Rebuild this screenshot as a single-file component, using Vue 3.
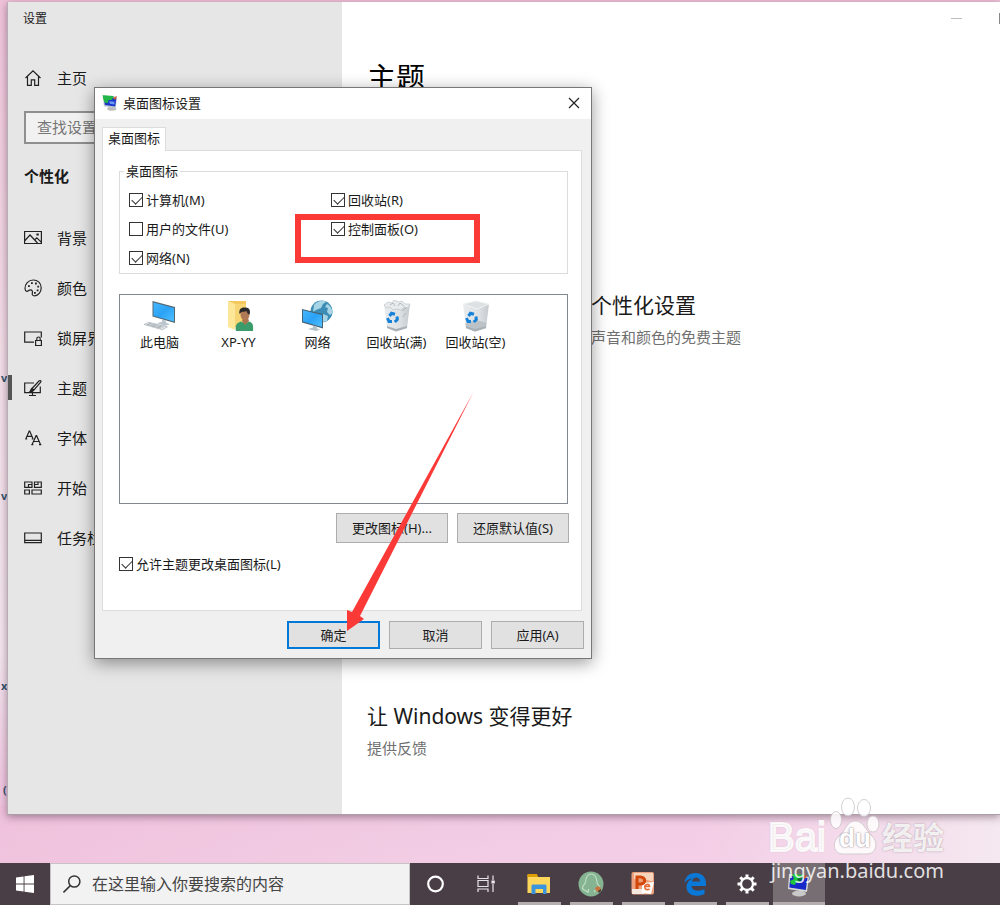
<script setup>
import { ref } from 'vue'

const navItems = [
  { id: 'background', label: '背景' },
  { id: 'colors', label: '颜色' },
  { id: 'lock', label: '锁屏界' },
  { id: 'themes', label: '主题', current: true },
  { id: 'fonts', label: '字体' },
  { id: 'start', label: '开始' },
  { id: 'taskbar', label: '任务栏' },
]

const checks = ref([
  { id: 'computer', label: '计算机(M)', on: true },
  { id: 'recycle', label: '回收站(R)', on: true },
  { id: 'files', label: '用户的文件(U)', on: false },
  { id: 'control', label: '控制面板(O)', on: true },
  { id: 'network', label: '网络(N)', on: true },
])
const allowThemes = ref(true)

const icons = [
  { id: 'pc', label: '此电脑' },
  { id: 'user', label: 'XP-YY' },
  { id: 'net', label: '网络' },
  { id: 'full', label: '回收站(满)' },
  { id: 'empty', label: '回收站(空)' },
]

const apps = [
  { id: 'explorer', name: 'explorer' },
  { id: 'tree', name: 'tree' },
  { id: 'ppt', name: 'ppt' },
  { id: 'edge', name: 'edge' },
  { id: 'gear', name: 'gear' },
  { id: 'display', name: 'display', active: true },
]
</script>

<template>
  <div class="desktop">
    <div class="shortcuts" aria-hidden="true">
      <span class="sc sc-top">v</span>
      <span class="sc sc-a">v</span>
      <span class="sc sc-b">x</span>
      <span class="sc sc-c">(</span>
    </div>

    <main class="settings">
      <aside class="sidebar">
        <div class="win-title">设置</div>
        <a class="nav-row home" href="#">
          <svg class="nav-icon" viewBox="0 0 18 18"><path d="M1.500 9 9 1.800 16.500 9M3.500 7.500v8.800h3.800v-5.500h3.400v5.500h3.800V7.500" /></svg>
          <span>主页</span>
        </a>
        <input class="find" type="text" placeholder="查找设置" aria-label="查找设置" />
        <h2 class="section">个性化</h2>
        <nav>
          <a v-for="n in navItems" :key="n.id" class="nav-row" :class="{ current: n.current }" href="#">
            <svg class="nav-icon" viewBox="0 0 18 18">
              <path v-if="n.id === 'background'" d="M.6 2.500h16.800v12H.6zM1 11.500l5-5.500 7.500 8M10.500 11l2.300-2.200 4.400 4.300M13 5h1.200v1H13z" />
              <g v-else-if="n.id === 'colors'">
                <path d="M1 9.800C.6 5 4.500 1 9.300 1c4.500 0 7.900 3.200 7.900 7.800 0 4.500-3 8-6.500 8-2.300 0-2.700-1.300-2.400-2.700.5-2-.3-3.200-1.700-3.200-2.200 0-2.300 1.700-3.800 1.500C1.600 12.200 1.100 11.200 1 9.800z" />
                <path class="fill" d="M4 6.200h1.800V8H4zM7 3.300h1.800v1.800H7zM11 3.600h1.800v1.800H11zM13.300 6.800h1.800v1.800h-1.800zM12.700 10.500h1.800v1.800h-1.800zM10 13h1.800v1.800H10z" />
              </g>
              <path v-else-if="n.id === 'lock'" d="M10 13.200H.7V3h16.600v5.500M11.600 11.500h5.800v5h-5.800zM12.800 11.300V9.700a1.700 1.700 0 0 1 3.400 0v1.600" />
              <g v-else-if="n.id === 'themes'">
                <path d="M10 4H.7v9.700h15.600V7.500M8.500 13.700v2.800M5 16.500h7M8 9.500l7.200-7.700c1.300-.8 2.200.3 1.500 1.400L10 11z" />
                <path class="fill" d="m7.500 8.800 2.700 2.500c-1 2.200-3.500 2.500-5.500 1.800 1.500-.8 1.200-2.800 2.800-4.300z" />
              </g>
              <path v-else-if="n.id === 'fonts'" d="M1.800 10 5.200 2h.5l3.400 8M3 7.400h5M1.200 10h2M7.700 10h1.600M8 15.700l4.100-9h.5l4 9M9.500 12.500h5.700M7.300 15.700h2M15 15.700h2.300" />
              <path v-else-if="n.id === 'start'" d="M.7 3h7.300v5.300H.7zM10.500 3h6.800v5.300h-6.800zM.7 11h4.700v4H.7zM8 11h9.300v4H8zM4.500 8V5.500H8M10.500 5.500H14V3" />
              <path v-else d="M.7 4h16.600v9.700H.7zM.7 11.300h16.600" />
            </svg>
            <span>{{ n.label }}</span>
          </a>
        </nav>
      </aside>

      <section class="content">
        <div class="caption"><i class="min"></i><i class="max"></i></div>
        <h1>主题</h1>
        <div class="more">
          <h2>个性化设置</h2>
          <p>声音和颜色的免费主题</p>
        </div>
        <div class="feedback">
          <h2>让 Windows 变得更好</h2>
          <a href="#">提供反馈</a>
        </div>
      </section>
    </main>

    <footer class="taskbar">
      <button class="start" aria-label="开始">
        <svg viewBox="0 0 18 18" width="18" height="18" fill="#fff"><path d="M0 2.600 7.600 1.500v7H0zM8.500 1.300 18 0v8.500H8.500zM0 9.400h7.600v7L0 15.400zM8.500 9.400H18V18l-9.500-1.300z" /></svg>
      </button>
      <label class="search">
        <svg viewBox="0 0 20 20" width="20" height="20" fill="none" stroke="#333" stroke-width="1.500"><circle cx="11.300" cy="7.500" r="5.600" /><path d="M7.300 11.600.5 18.400" /></svg>
        <input type="text" placeholder="在这里输入你要搜索的内容" aria-label="在这里输入你要搜索的内容" />
      </label>
      <button class="tb-btn" aria-label="Cortana">
        <svg viewBox="0 0 20 20" width="20" height="20" fill="none" stroke="#fff" stroke-width="2.200"><circle cx="9.500" cy="10" r="7.300" /></svg>
      </button>
      <button class="tb-btn" aria-label="任务视图">
        <svg viewBox="0 0 20 20" width="20" height="20" fill="none" stroke="#e8e4e6" stroke-width="1.200"><path d="M1 1.500v3h10v-3M1 18v-3h10v3M1 6.500h10v6H1zM16 1.500V6M16 10v8" /><path d="M15 7h2.200v2H15z" fill="#fff" /></svg>
      </button>
      <div class="apps">
        <button v-for="a in apps" :key="a.id" class="app" :class="[a.id, { active: a.active }]" :aria-label="a.name">
          <svg viewBox="0 0 26 26" width="26" height="26">
            <g v-if="a.id === 'explorer'">
              <path d="M1.500 4h9l1.500 2h12v16h-22.500z" fill="#ffd65c" /><path d="M1.500 3h9.500l1 3H1.500z" fill="#dc9c05" />
              <path d="M5.500 23V15c0-1 .5-1.500 1.500-1.500h12c1 0 1.500.5 1.500 1.500v8H17v-5H9.500v5z" fill="#3c95dc" />
            </g>
            <g v-else-if="a.id === 'tree'">
              <circle cx="13" cy="13" r="12.500" fill="#86b391" />
              <path d="M10.500 18v3c-1.500.5-2-1-3-1.500-1.500-.5-3-1-3-2.500 0-3 2.500-3 3-6C8 6 9.500 3 13 3s5.500 3 6 8c.5 3 2.500 3.500 2.500 6 0 1.500-2 1-3.500 1.500-1 .5-1 2-2 2.500" fill="none" stroke="#bfe0c6" stroke-width="1.200" />
              <path d="m17 17 3-2 3 2-1 4-4-1z" fill="#c7743e" /><path d="m20 20 3-2v2l-2 2z" fill="#443b35" />
            </g>
            <g v-else-if="a.id === 'ppt'">
              <rect x="1.500" y="1" width="22.500" height="22.500" rx="2" fill="#eda07b" />
              <path d="M4 2h19v8c-5 0-10-4-19-2z" fill="#f7d5bd" /><path d="M2 18h12v5H2z" fill="#f4e8df" />
              <path d="m12 12 12-1-3 12-9-1z" fill="#fff" />
              <path d="M7 18V6h3.500c5.500 0 5.500 7 0 7H7" fill="none" stroke="#d3470b" stroke-width="3" />
              <path d="M14.500 15.500h5c-.5-4-5.500-2-4.500 1.500.7 2 3 2 4.500 1" fill="none" stroke="#e56b36" stroke-width="1.700" />
            </g>
            <path v-else-if="a.id === 'edge'" d="M2.500 12C3 6 7 2 13.500 2 20 2 24 6.500 24 12.500V15H9.500c.3 5 7.500 6 13 3v5C14 27 4.500 24 4.500 16c0-4 2.500-7 6-8.500-4 .3-6.500 2-8 4.500zM10 10.500h8c0-5-7-5.500-8 0z" fill="#0a78d7" />
            <g v-else-if="a.id === 'gear'" fill="none" stroke="#fff">
              <circle cx="13" cy="13" r="6" stroke-width="2.300" />
              <path d="M13 3.500v3M13 19.500v3M3.500 13h3M19.500 13h3M6.300 6.300l2.200 2.200M17.500 17.500l2.200 2.200M19.700 6.300l-2.200 2.200M8.500 17.500l-2.200 2.200" stroke-width="3" />
            </g>
            <g v-else>
              <ellipse cx="13" cy="22.500" rx="7" ry="3" fill="#c9c9c9" />
              <path d="m3 3 20 3-2 15-19-3z" fill="#d8d8d8" /><path d="m4.500 4.500 17 2.500-1.700 12-16.500-2.500z" fill="#1628c7" />
              <path d="m6 3 12 1-1 4-4 0 1 4-4-1-1 3-4-1-1-3 4-2z" fill="#20c93a" /><path d="m11 8 5-3 3 1-6 5z" fill="#0b6f31" /><path d="m17 6 4-2-2 4z" fill="#d24a25" />
            </g>
          </svg>
        </button>
      </div>
    </footer>

    <div class="dialog" role="dialog" aria-label="桌面图标设置">
      <header class="dlg-bar">
        <svg class="dlg-icon" viewBox="0 0 26 26">
          <ellipse cx="15" cy="22.500" rx="7" ry="3" fill="#bbb" />
          <path d="m1 2 22 2-2 17-18-2z" fill="#c5ccd0" /><path d="m3 4 19 2-1.700 13-16-2z" fill="#1b35cc" />
          <path d="m1 2 17 1-3 6-5 0-1 5-5-1-2-5z" fill="#20b64a" /><path d="m17 6 6-3-3 6z" fill="#e2592c" /><path d="m11 11 8 1 0 4-7-1z" fill="#6f9cf3" />
        </svg>
        <span class="dlg-title">桌面图标设置</span>
        <button class="close" aria-label="关闭">
          <svg viewBox="0 0 12 12" width="12" height="12" stroke="#222" stroke-width="1.200"><path d="m1 1 10 10M11 1 1 11" /></svg>
        </button>
      </header>
      <div class="tabs"><button class="tab">桌面图标</button></div>
      <div class="panel">
        <fieldset class="group">
          <legend>桌面图标</legend>
          <div class="checks">
            <label v-for="c in checks" :key="c.id" class="check"><input v-model="c.on" type="checkbox" />{{ c.label }}</label>
          </div>
        </fieldset>
        <ul class="list">
          <li v-for="i in icons" :key="i.id">
            <svg viewBox="0 0 32 32" width="32" height="32">
              <defs>
                <linearGradient id="screen" x1="0" y1="0" x2="1" y2="1"><stop offset="0" stop-color="#45b7fb" /><stop offset=".5" stop-color="#2aa2f6" /><stop offset="1" stop-color="#52c0ff" /></linearGradient>
                <linearGradient id="bin" x1="0" y1="0" x2="1" y2="0"><stop offset="0" stop-color="#e9ecee" /><stop offset=".6" stop-color="#dde1e4" /><stop offset="1" stop-color="#c4cacf" /></linearGradient>
              </defs>
              <g v-if="i.id === 'pc'">
                <path d="m8.500 1 22.500 6v16L8.500 16.500z" fill="#536773" /><path d="m9.500 2.400 20.500 5.500v13.500l-20.500-5.700z" fill="url(#screen)" />
                <path d="m18 19.500 4 1.200v2l4 1.500-5 1.500-8-2.500 5-1.500z" fill="#bbc6cc" />
                <path d="m0 24.500 5-2.200 18.500 4.500-5 3z" fill="#dce1e4" stroke="#a3adb4" stroke-width=".6" /><path d="m3 24.500 14 3.500M5 23.600l14 3.500M7 22.900 3 25.500M12 24l-4 3M17 25.300l-4 3" stroke="#8f9aa1" stroke-width=".5" />
              </g>
              <g v-else-if="i.id === 'user'">
                <path d="M5 1h18v26H9z" fill="#f3c95d" /><path d="m5 1 7 3v26l-7-3z" fill="#ffe79a" /><path d="M12 4h11v22H12z" fill="#f7d574" />
                <path d="M13 31c-1-5 0-8 5-9.500l4 2 4-2c4 1 4.500 4 4 9.500z" fill="#3b9b6b" /><path d="m19 21 3 4 4-4-1-3h-5z" fill="#a9744e" />
                <ellipse cx="22" cy="14.500" rx="4.500" ry="5.500" fill="#b07b54" /><path d="M16.500 14c-1-5 2-7 5.500-6.500 4-.5 6 3 4.500 7-2-.5-2.500-2-3-3.500-2 1-4 .5-5 1z" fill="#29292b" />
              </g>
              <g v-else-if="i.id === 'net'">
                <circle cx="19.500" cy="11.500" r="11" fill="#3c8db5" /><path d="M12 5c4-5 10-5 12-3l-3 2-2 4-5 2-3 2zM25 4c4 2 5.500 6 5.500 9l-2.500 2-3-3 1-4-3-1zM21 14l5 2-1 5-4 1z" fill="#a7d5e5" />
                <path d="m0 9 21 5v14.500L0 22.500z" fill="#476274" /><path d="m1 10.300 19 4.600V27L1 21.500z" fill="url(#screen)" />
                <path d="m11 25.500 4 1v2l3 1-4 1.500-8-2 5-1.500z" fill="#b4c1c8" />
              </g>
              <g v-else>
                <path d="m3 4 13 4L29 4l-3 24-11 3.500L6 28z" fill="url(#bin)" />
                <path v-if="i.id === 'empty'" d="m3 4 13-3L29 4l-12 5z" fill="#dde1e3" stroke="#f1f3f4" />
                <path v-if="i.id === 'empty'" d="m5.500 23 11-3 10 3-.7 5-10.800 3.500L6 28z" fill="#bcc3c8" />
                <path d="m6 26 9 3 11-3v2l-11 3.500L6 28z" fill="#a9b0b6" />
                <path v-if="i.id === 'full'" d="m3 5 4-3 4 1 2-3 5 2 3-1 3 3 5 0-2 4-4-1-3 3-4-1-4 1-3-3-4 1z" fill="#e8ebed" stroke="#bec5ca" stroke-width=".7" />
                <path v-if="i.id === 'full'" d="m9 5 3-2 2 3M17 6l2-3 4 3M21 11l4-3M22 17l3-4" fill="none" stroke="#a5adb3" stroke-width=".8" />
                <g fill="none" stroke="#1681d8" stroke-width="3"><path d="m8.500 16 2-2.700 3.500 1M6.500 18l1.500 3.500h3M16 16.500l.3 3-2.500 2.500" /></g>
              </g>
            </svg>
            <span>{{ i.label }}</span>
          </li>
        </ul>
        <div class="actions">
          <button class="btn">更改图标(H)...</button>
          <button class="btn">还原默认值(S)</button>
        </div>
        <label class="check allow"><input v-model="allowThemes" type="checkbox" />允许主题更改桌面图标(L)</label>
      </div>
      <div class="dlg-foot">
        <button class="btn primary">确定</button>
        <button class="btn">取消</button>
        <button class="btn">应用(A)</button>
      </div>
      <div class="mark"></div>
      <svg class="arrow" viewBox="0 0 128 240" width="128" height="240"><path d="M127.500 1 14 225l4 3-17 12V219l5 2z" fill="#fb3a38" /></svg>
    </div>

    <div class="watermark">
      <div class="brand">
        <span class="bai">Bai</span>
        <span class="paw">
          <svg viewBox="0 0 50 58" width="50" height="58">
            <g fill="#fff" fill-opacity=".85" stroke="#c9c3c6" stroke-opacity=".8">
              <ellipse cx="6" cy="23" rx="5.500" ry="8.500" /><ellipse cx="18" cy="10" rx="6.500" ry="9" /><ellipse cx="34" cy="11" rx="6.500" ry="8.500" /><ellipse cx="43" cy="27" rx="6" ry="8" />
              <path d="M25 24c-8 0-9 9-16 15-8 7-5 18 4 18h24c9 0 12-11 5-18-7-7-9-15-17-15z" />
            </g>
          </svg>
          <b>du</b>
        </span>
        <span class="jy">经验</span>
      </div>
      <div class="url">jingyan.baidu.com</div>
    </div>
  </div>
</template>

<style>
body { margin: 0; }
</style>

<style scoped>
* { box-sizing: border-box; }
.desktop {
  position: relative;
  min-height: 100vh;
  display: flex;
  flex-direction: column;
  overflow: hidden;
  padding-top: 2px;
  background:
    linear-gradient(90deg, rgba(240, 190, 218, .6), rgba(245, 212, 232, .2) 40%, rgba(246, 210, 234, .5) 70%, #f5e8f0) bottom / 100% 100px no-repeat,
    linear-gradient(#efc3da, #f3dfe7 40%, #f3e6ee 72%, #efc5df 88%, #f2cfe6);
  color: #1a1a1a;
  font-family: "Noto Sans", "Noto Sans CJK SC", sans-serif;
  font-size: 15px;
  line-height: 20px;
}
h1, h2, p, ul { margin: 0; padding: 0; font-weight: 400; }
a { color: inherit; text-decoration: none; }
button, input { font: inherit; color: inherit; margin: 0; padding: 0; }
button { border: 0; background: none; }

.shortcuts { position: absolute; left: 0; top: 0; }
.sc { position: absolute; left: 1px; font-size: 11px; line-height: 14px; font-weight: 700; color: #31536e; }
.sc-top { top: 371px; }
.sc-a { top: 489px; }
.sc-b { top: 679px; }
.sc-c { top: 783px; left: 3px; }

.settings {
  flex: 1;
  display: grid;
  grid-template-columns: 334px 1fr;
  margin: 0 0 48px 7px;
  border-left: 1px solid #b9adb5;
  border-bottom: 1px solid #a99fa6;
  box-shadow: 0 2px 8px rgba(60, 30, 50, .45);
  background: #fff;
  position: relative;
}
.sidebar { background: #e6e6e6; }
.win-title { height: 51px; padding: 7px 15px; font-size: 12px; }
.nav-row { position: relative; display: flex; align-items: center; height: 50px; padding-left: 16px; gap: 15px; }
.nav-icon { width: 18px; height: 18px; fill: none; stroke: #222; stroke-width: 1.2; }
.nav-icon .fill { fill: #222; stroke: none; }
.current::before { content: ""; position: absolute; left: 0; top: 12px; width: 4px; height: 25px; background: #555; }
.find {
  display: block;
  width: 301px;
  height: 33px;
  margin: 8px 16px;
  padding: 0 11px 2px;
  border: 2px solid #8f8f8f;
  background: #f1f1f1;
}
.find::placeholder { color: #777; opacity: 1; }
.section { height: 61px; padding: 14px 16px; font-size: 15px; font-weight: 700; }

.content { padding-left: 25px; }
.content h1 { height: 178px; padding-top: 22px; font-size: 29px; line-height: 40px; color: #000; }
.caption { display: flex; justify-content: flex-end; gap: 37px; height: 34px; padding-top: 11px; }
.min { width: 11px; height: 1px; margin-top: 5px; background: #bbb; }
.max { width: 1px; height: 11px; background: #888; }
.content h2 { font-size: 21px; line-height: 30px; }
.content p, .content a { display: block; margin-top: 7px; color: #707070; }
.content .more { height: 411px; padding: 76px 0 0 224px; }
.content .feedback { padding-top: 76px; }

.taskbar { display: flex; height: 42px; background: #4a3e46; position: relative; }
.start { width: 50px; display: grid; place-items: center; }
.search { width: 360px; display: flex; align-items: center; gap: 9px; padding-left: 12px; background: #f2f2f2; border: 1px solid #c8c4c6; font-size: 16px; }
.search input { flex: 1; min-width: 0; border: 0; background: none; outline: 0; }
.search input::placeholder { color: #444; opacity: 1; }
.tb-btn { width: 51px; display: grid; place-items: center; }
.apps { display: flex; margin-left: 1px; }
.app { position: relative; width: 52px; padding-bottom: 1px; display: grid; place-items: center; }
.app::after { content: ""; position: absolute; left: 5px; right: 4px; bottom: 0; height: 3px; background: #b5aeae; }
.app.active { background: #766e72; }
.app.active::after { left: 0; right: 0; }

.dialog {
  position: absolute;
  left: 94px;
  top: 87px;
  width: 498px;
  border: 1px solid #777;
  background: #f0f0f0;
  box-shadow: 0 4px 16px rgba(0, 0, 0, .4);
  font-size: 13px;
  display: flex;
  flex-direction: column;
}
.dlg-bar { display: flex; align-items: center; height: 31px; padding: 0 11px 2px 7px; background: #fff; }
.dlg-icon { width: 17px; height: 17px; }
.dlg-title { flex: 1; margin-left: 4px; }
.close { display: grid; place-items: center; }
.tabs { display: flex; padding: 8px 7px 0; }
.tab { width: 64px; height: 24px; margin-bottom: -1px; padding-bottom: 3px; position: relative; background: #fff; border: 1px solid #dcdcdc; border-bottom: 0; }
.panel { margin: 0 9px 0 7px; padding: 10px 13px 32px 16px; background: #fff; border: 1px solid #dcdcdc; }
.group { margin: 0; padding: 4px 9px 1px; border: 1px solid #dcdcdc; min-width: 0; }
legend { margin-left: -5px; padding: 0 2px; }
.checks { display: grid; grid-template-columns: 202px 1fr; }
.check { display: flex; align-items: center; gap: 3px; height: 29px; }
.check input { appearance: none; position: relative; flex: none; width: 14px; height: 14px; border: 1px solid #333; background: #fff; }
.check input:checked::after { content: ""; position: absolute; left: 2px; top: 2px; width: 9px; height: 5px; border: solid #333; border-width: 0 0 1px 1px; transform: rotate(-45deg); }
.list { display: flex; height: 210px; margin-top: 20px; padding-top: 5px; border: 1px solid #828790; list-style: none; }
.list li { width: 79px; display: flex; flex-direction: column; align-items: center; white-space: nowrap; }
.actions { display: flex; justify-content: flex-end; gap: 9px; margin: 9px -1px 6px 0; }
.btn { height: 28px; background: #e1e1e1; border: 1px solid #adadad; width: 93px; }
.actions .btn { width: 112px; height: 30px; }
.btn.primary { border: 2px solid #0078d7; }
.dlg-foot { display: flex; justify-content: flex-end; gap: 9px; padding: 10px 7px 9px; }
.mark { position: absolute; left: 200px; top: 126px; width: 185px; height: 49px; border: 6px solid #fb3a38; }
.arrow { position: absolute; left: 251px; top: 303px; pointer-events: none; }

.watermark { position: absolute; right: 56px; bottom: 24px; color: rgba(255, 255, 255, .85); pointer-events: none; }
.brand { display: flex; align-items: flex-end; justify-content: flex-end; height: 54px; margin-bottom: 9px; font-weight: 700; text-shadow: 0 0 2px rgba(120, 100, 110, .6); }
.bai { font-size: 40px; line-height: 30px; width: 62px; font-family: "Liberation Sans", sans-serif; font-weight: 400; -webkit-text-stroke: 2px rgba(255, 255, 255, .85); }
.paw { position: relative; width: 52px; height: 58px; margin-bottom: -3px; }
.paw b { position: absolute; left: 0; right: 2px; bottom: 2px; text-align: center; font-size: 26px; line-height: 30px; font-family: "Liberation Sans", sans-serif; color: #fff; text-shadow: 0 0 2px rgba(110, 90, 100, .9); }
.jy { font-size: 31px; line-height: 30px; }
.url { font-size: 20px; line-height: 20px; text-align: right; }
</style>
